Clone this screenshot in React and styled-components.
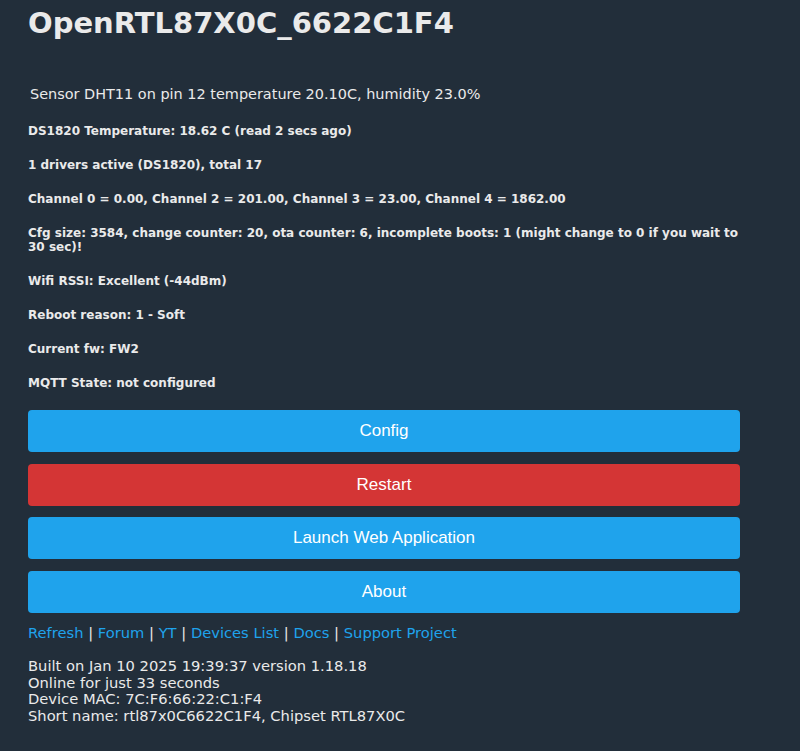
import React from "react";
import styled, { createGlobalStyle } from "styled-components";

const Global = createGlobalStyle`
  html, body { margin: 0; padding: 0; }
  body {
    background: #222e3a;
    color: #eaeaea;
    font-family: "DejaVu Sans", Verdana, sans-serif;
    font-size: 14px;
  }
`;

const Main = styled.div`
  width: 712px;
  padding: 0 0 0 28px;
`;

const Title = styled.h1`
  font-size: 29px;
  font-weight: bold;
  margin: 5px 0 0 0;
  line-height: 36px;
`;

const Sensor = styled.div`
  font-size: 14.45px;
  margin: 44px 0 0 2px;
  line-height: 18px;
`;

const Status = styled.h5`
  font-size: 12px;
  font-weight: bold;
  line-height: 14px;
  margin: 20px 0 0 0;
  &:first-of-type {
    margin-top: 21px;
  }
`;

const Buttons = styled.div`
  display: flex;
  flex-direction: column;
  gap: 11.7px;
  margin-top: 20px;
`;

const Button = styled.button`
  display: block;
  width: 100%;
  height: 42px;
  border: 0;
  border-radius: 4px;
  background: ${(p) => (p.$danger ? "#d43535" : "#1fa3ec")};
  color: #fff;
  font-family: "Liberation Sans", Arial, sans-serif;
  font-size: 17px;
  cursor: pointer;
`;

const Links = styled.div`
  margin-top: 11px;
  font-size: 14.7px;
  line-height: 17px;
`;

const Link = styled.a`
  color: #1fa3ec;
  text-decoration: none;
`;

const Footer = styled.div`
  margin-top: 17px;
  font-size: 14.7px;
  line-height: 16.7px;
`;

const statuses = [
  "DS1820 Temperature: 18.62 C (read 2 secs ago)",
  "1 drivers active (DS1820), total 17",
  "Channel 0 = 0.00, Channel 2 = 201.00, Channel 3 = 23.00, Channel 4 = 1862.00",
  "Cfg size: 3584, change counter: 20, ota counter: 6, incomplete boots: 1 (might change to 0 if you wait to 30 sec)!",
  "Wifi RSSI: Excellent (-44dBm)",
  "Reboot reason: 1 - Soft",
  "Current fw: FW2",
  "MQTT State: not configured",
];

const links = ["Refresh", "Forum", "YT", "Devices List", "Docs", "Support Project"];

export default function App() {
  return (
    <>
      <Global />
      <Main>
        <Title>OpenRTL87X0C_6622C1F4</Title>
        <Sensor>Sensor DHT11 on pin 12 temperature 20.10C, humidity 23.0%</Sensor>
        {statuses.map((s) => (
          <Status key={s}>{s}</Status>
        ))}
        <Buttons>
          <Button>Config</Button>
          <Button $danger>Restart</Button>
          <Button>Launch Web Application</Button>
          <Button>About</Button>
        </Buttons>
        <Links>
          {links.map((l, i) => (
            <React.Fragment key={l}>
              {i > 0 && " | "}
              <Link href="#">{l}</Link>
            </React.Fragment>
          ))}
        </Links>
        <Footer>
          Built on Jan 10 2025 19:39:37 version 1.18.18
          <br />
          Online for just 33 seconds
          <br />
          Device MAC: 7C:F6:66:22:C1:F4
          <br />
          Short name: rtl87x0C6622C1F4, Chipset RTL87X0C
        </Footer>
      </Main>
    </>
  );
}
